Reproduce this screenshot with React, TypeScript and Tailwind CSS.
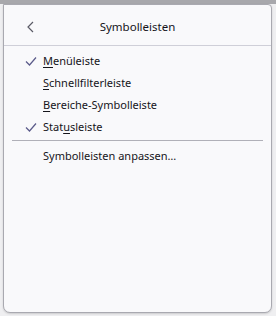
import React from "react";

const Check = () => (
  <svg width="14" height="14" viewBox="0 0 14 14" className="shrink-0">
    <path d="M2 7.5 L5.5 11 L12 3.5" fill="none" stroke="#5b5b8a" strokeWidth="1.2" />
  </svg>
);

function Item({ checked, pre, u, post }: { checked?: boolean; pre: string; u: string; post: string }) {
  return (
    <div className="flex items-center h-[22px] pl-[20px]">
      <div className="w-[19px] flex items-center">{checked ? <Check /> : null}</div>
      <span>
        {pre}
        <span className="underline underline-offset-2">{u}</span>
        {post}
      </span>
    </div>
  );
}

export default function App() {
  return (
    <div
      className="w-[276px] h-[316px] bg-[#efeff1] relative overflow-hidden text-[#15141a]"
      style={{ fontFamily: '"Noto Sans", "Open Sans", sans-serif' }}
    >
      <div className="h-[4px] bg-[#a8a8ac]" />
      <div className="absolute left-[3px] top-[4px] w-[269px] h-[309px] bg-[#f9f9fb] border border-[#a9a9b0] rounded-b-[7px] rounded-tr-[4px] shadow-[0_1px_2px_rgba(0,0,0,0.15)] text-[11px]">
        <div className="h-[40px] relative flex items-center justify-center pt-[4px]">
          <svg width="10" height="12" viewBox="0 0 10 12" className="absolute left-[22px] top-[16px]">
            <path d="M7 1 L2 6 L7 11" fill="none" stroke="#5b5b66" strokeWidth="1.2" />
          </svg>
          <span className="text-[11.5px]">Symbolleisten</span>
        </div>
        <div className="h-px bg-[#cfcfd8]" />
        <div className="pt-[4px]">
          <Item checked pre="" u="M" post="enüleiste" />
          <Item pre="" u="S" post="chnellfilterleiste" />
          <Item pre="" u="B" post="ereiche-Symbolleiste" />
          <Item checked pre="Stat" u="u" post="sleiste" />
        </div>
        <div className="mx-[8px] mt-[2px] mb-[4px] h-px bg-[#b0b0b8]" />
        <div className="flex items-center h-[22px] pl-[39px]">Symbolleisten anpassen…</div>
      </div>
    </div>
  );
}
